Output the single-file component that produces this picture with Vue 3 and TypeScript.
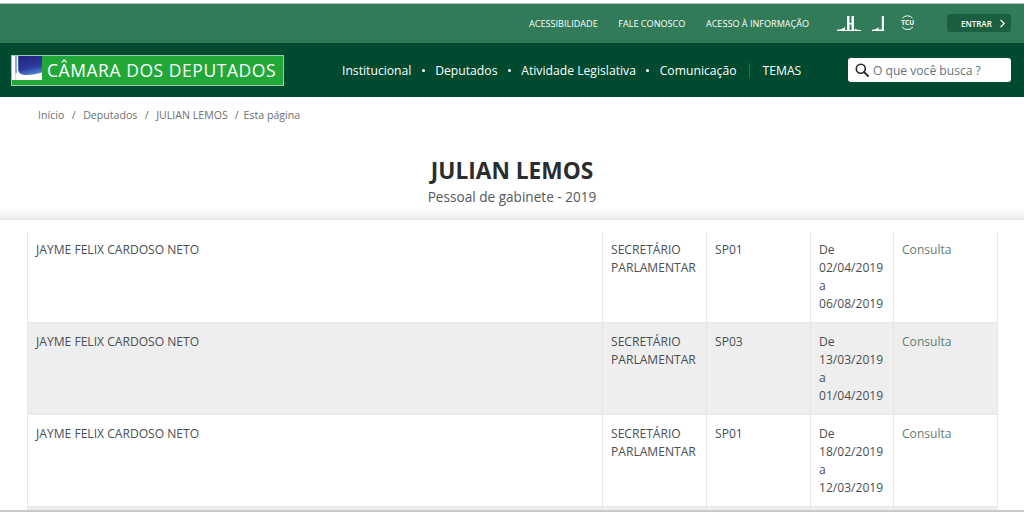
<script setup lang="ts">
interface Row { name: string; role: string[]; post: string; from: string; to: string; }
const rows: Row[] = [
  { name: 'JAYME FELIX CARDOSO NETO', role: ['SECRETÁRIO', 'PARLAMENTAR'], post: 'SP01', from: '02/04/2019', to: '06/08/2019' },
  { name: 'JAYME FELIX CARDOSO NETO', role: ['SECRETÁRIO', 'PARLAMENTAR'], post: 'SP03', from: '13/03/2019', to: '01/04/2019' },
  { name: 'JAYME FELIX CARDOSO NETO', role: ['SECRETÁRIO', 'PARLAMENTAR'], post: 'SP01', from: '18/02/2019', to: '12/03/2019' },
];
const nav = ['Institucional', 'Deputados', 'Atividade Legislativa', 'Comunicação'];
</script>

<template>
  <div class="page">
    <header class="header">
      <div class="topbar">
        <a class="toplink">ACESSIBILIDADE</a>
        <a class="toplink l2">FALE CONOSCO</a>
        <a class="toplink l2">ACESSO À INFORMAÇÃO</a>
        <svg class="ic ic1" width="24" height="15" viewBox="0 0 24 15">
          <path d="M0 15 L0 13.800 C3.500 13.500 6 13 8 11 L8 15Z M18 12.500 C19.500 13.800 21 14 24 14 L24 15 L18 15Z" fill="#fff"/>
          <path d="M10 0h2.500v15H10zM14.500 0H17v15h-2.500z" fill="#fff"/>
          <rect x="12" y="7" width="3" height="1.500" fill="#fff"/>
          <rect x="8" y="14" width="10" height="1" fill="#fff"/>
        </svg>
        <svg class="ic ic2" width="12" height="15" viewBox="0 0 12 15">
          <path d="M0 15 L0 13.800 C3 13.500 5 12.800 6.500 11 L6.500 15Z" fill="#fff"/>
          <rect x="9.800" y="0" width="2.200" height="15" fill="#fff"/>
          <rect x="6" y="13.500" width="6" height="1.500" fill="#fff"/>
        </svg>
        <span class="tcu">
          <svg width="15" height="15" viewBox="0 0 15 15"><path d="M2.500 3A6.800 6.800 0 0 1 12.500 3M13 11.800A6.800 6.800 0 0 1 2 11.800" fill="none" stroke="#fff" stroke-width="1"/></svg>
          <b>TCU</b>
        </span>
        <button class="enter" type="button">ENTRAR
          <svg width="7" height="9" viewBox="0 0 7 9"><path d="M1.500 .8L5.200 4.500L1.500 8.200" fill="none" stroke="#fff" stroke-width="1.200"/></svg>
        </button>
      </div>
      <div class="mainbar">
        <div class="logo">
          <svg class="mark" width="30" height="29" viewBox="0 0 30 29">
            <defs><linearGradient id="sky" x1="0" y1="0" x2="0.300" y2="1"><stop offset="0" stop-color="#241f7c"/><stop offset=".6" stop-color="#2a3a9c"/><stop offset="1" stop-color="#5a9be0"/></linearGradient></defs>
            <rect width="30" height="24" fill="url(#sky)"/>
            <rect width="3.500" height="24" fill="#fff"/>
            <rect x="3.500" width="1.500" height="17" fill="#7fb4ea"/>
            <path d="M5 0h1.200v14C7 18 10 19 15 19 C20 19 25 18 30 16.500V24H3.500V17H5Z" fill="#fff"/>
            <rect y="24" width="30" height="5" fill="#21a839"/>
          </svg>
          <span class="logotext">CÂMARA DOS DEPUTADOS</span>
        </div>
        <nav class="nav">
          <template v-for="(item, i) in nav" :key="item">
            <span v-if="i" class="dot"></span>
            <a>{{ item }}</a>
          </template>
          <span class="sep"></span>
          <a>TEMAS</a>
        </nav>
        <div class="search">
          <svg width="14" height="14" viewBox="0 0 14 14"><circle cx="5.800" cy="5.800" r="4.500" fill="none" stroke="#1f2a2a" stroke-width="1.600"/><path d="M9 9l4 4" stroke="#1f2a2a" stroke-width="1.800" stroke-linecap="round"/></svg>
          <span>O que você busca ?</span>
        </div>
      </div>
    </header>

    <div class="crumbs">
      <a>Início</a><i>/</i><a>Deputados</a><i>/</i><a>JULIAN LEMOS</a><i class="last">/</i><span>Esta página</span>
    </div>

    <div class="titlebox">
      <h1>JULIAN LEMOS</h1>
      <p>Pessoal de gabinete - 2019</p>
    </div>

    <div class="content">
      <table>
        <colgroup>
          <col class="c1" /><col class="c2" /><col class="c3" /><col class="c4" /><col class="c5" />
        </colgroup>
        <tbody>
          <tr v-for="(r, i) in rows" :key="i" :class="{ odd: i % 2 === 1, first: i === 0 }">
            <td>{{ r.name }}</td>
            <td>{{ r.role[0] }}<br />{{ r.role[1] }}</td>
            <td>{{ r.post }}</td>
            <td>De<br />{{ r.from }}<br />a<br />{{ r.to }}</td>
            <td class="link">Consulta</td>
          </tr>
          <tr class="odd stub"><td></td><td></td><td></td><td></td><td></td></tr>
        </tbody>
      </table>
    </div>
    <div class="cutline"></div>
  </div>
</template>

<style>
html, body { margin: 0; background: #fff; overflow: hidden; }
</style>

<style scoped>
.page { width: 1024px; height: 516px; overflow: hidden; font-family: "Open Sans", sans-serif; color: #3f4347; background: #fff; }
.header { padding-top: 3px; background: #fff; position: relative; }
.topbar { height: 40px; box-sizing: border-box; border-top: 1px solid #b8bcba; background: #317b59; display: flex; align-items: center; color: #fff; font-size: 9.100px; padding-left: 529px; }
.toplink { white-space: nowrap; }
.l2 { margin-left: 20.500px; }
.ic { display: block; flex: none; margin-top: -1px; }
.ic1 { margin-left: 28px; }
.ic2 { margin-left: 11px; }
.tcu { position: relative; width: 15px; height: 15px; margin-left: 16px; margin-top: -2px; display: block; flex: none; }
.tcu svg { display: block; }
.tcu b { position: absolute; left: 0; right: 0; top: 3px; text-align: center; font-size: 6.500px; line-height: 9px; font-weight: 700; }
.enter { position: absolute; left: 947px; top: 14px; width: 64px; height: 18px; padding: 0 0 0 14px; display: flex; align-items: center; gap: 7px; border: 0; border-radius: 3px; background: #1b5f41; color: #fff; font: 600 8px "Open Sans", sans-serif; }
.mainbar { height: 54px; background: #004a2f; display: flex; align-items: center; position: relative; }
.logo { margin-left: 11px; width: 273px; height: 31px; box-sizing: border-box; border: 1px solid #9fc7ab; background: #21a839; display: flex; align-items: flex-start; }
.mark { display: block; flex: none; }
.logotext { color: #fff; font-size: 17.500px; line-height: 29px; margin-left: 5px; white-space: nowrap; letter-spacing: .55px; }
.nav { margin-left: 58px; display: flex; align-items: center; color: #fff; font-size: 12.180px; white-space: nowrap; }
.dot { width: 3px; height: 3px; margin: 0 10.400px; background: #fff; border-radius: 50%; }
.sep { width: 1px; height: 15px; background: #2b6a4f; margin: 0 12px 0 13px; }
.search { position: absolute; left: 848px; top: 15px; width: 163px; height: 24px; box-sizing: border-box; border-radius: 3px; background: #fff; display: flex; align-items: center; padding-left: 7px; gap: 4px; color: #66737d; font-size: 12.100px; white-space: nowrap; }
.search svg { flex: none; }
.crumbs { height: 35px; padding-left: 38px; display: flex; align-items: center; font-size: 10.600px; color: #6b7072; white-space: nowrap; }
.crumbs i { font-style: normal; margin: 0 7.500px; }
.crumbs i.last { margin: 0 5px 0 7px; }
.titlebox { height: 88px; box-sizing: border-box; text-align: center; background: linear-gradient(to bottom, #fff 0, #fff 76px, #f0f0f0 85px, #e9e9e9 88px); padding-top: 23.500px; }
.titlebox h1 { margin: 0; font-size: 22.700px; line-height: 29px; font-weight: 700; color: #2a2d30; }
.titlebox p { margin: 0; font-size: 13.600px; line-height: 24px; color: #54585b; }
.content { padding: 12px 26.500px 0; height: 290px; box-sizing: border-box; overflow: hidden; }
table { width: 970px; table-layout: fixed; border-collapse: collapse; font-size: 12.100px; line-height: 18.300px; color: #4a4e52; }
.c1 { width: 575px; } .c2 { width: 104px; } .c3 { width: 104px; } .c4 { width: 83px; } .c5 { width: 104px; }
td { box-sizing: border-box; vertical-align: top; padding: 10px 8.500px 0; height: 92px; border: 1px solid #e6e7e8; border-top: 0; }
tr.first td { height: 90px; padding-top: 8.500px; }
tr.odd td { background: #eeeeee; }
.link { color: #5e8070; }
.stub td { height: 4px; padding: 0; border-bottom: 0; }
.cutline { height: 2px; background: #c9c9c9; }
</style>
